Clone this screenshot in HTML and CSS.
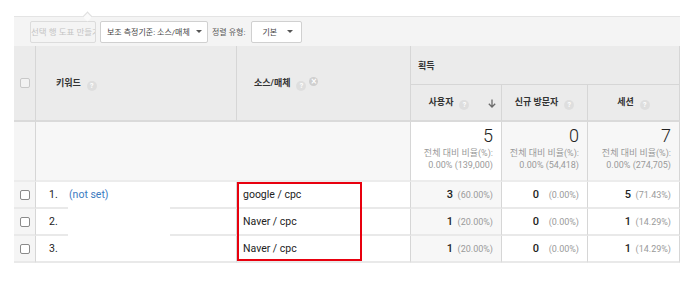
FILE: index.html
```html
<!DOCTYPE html>
<html lang="ko">
<head>
<meta charset="utf-8">
<title>보고서</title>
<link rel="stylesheet" href="styles.css">
</head>
<body>
<div class="page">
  <div class="toolbar">
    <span class="btn btn-disabled">선택 행 도표 만들기</span>
    <span class="btn btn-select btn-dim"><span class="btn-text">보조 측정기준: 소스/매체</span><span class="caret"></span></span>
    <span class="tool-label">정렬 유형:</span>
    <span class="btn btn-select btn-sort"><span class="btn-text">기본</span><span class="caret"></span></span>
  </div>
  <div class="table-wrap">
    <table class="report">
      <colgroup>
        <col class="w-chk"><col class="w-key"><col class="w-src"><col class="w-users"><col class="w-new"><col class="w-sess">
      </colgroup>
      <thead>
        <tr class="hrow1">
          <th rowspan="2" class="c-chk hcell"><span class="checkbox checkbox-head"></span></th>
          <th rowspan="2" class="hcell dim-key">키워드<span class="help">?</span></th>
          <th rowspan="2" class="hcell dim-src">소스/매체<span class="help">?</span><span class="remove">×</span></th>
          <th colspan="3" class="hcell group">획득</th>
        </tr>
        <tr class="hrow2">
          <th class="hcell metric metric-sorted">사용자<span class="help">?</span><svg class="sort-arrow" width="8" height="9" viewBox="0 0 8 9"><path d="M4 0.5V8M0.8 4.8L4 8L7.2 4.8" fill="none" stroke="#6b6b6b" stroke-width="1.3"/></svg></th>
          <th class="hcell metric">신규 방문자<span class="help">?</span></th>
          <th class="hcell metric">세션<span class="help">?</span></th>
        </tr>
      </thead>
      <tbody>
        <tr class="totals">
          <td class="c-chk"></td>
          <td colspan="2" class="tot-dim"></td>
          <td class="tot tot-sorted"><div class="tot-num">5</div><div class="tot-sub">전체 대비 비율(%):<br>0.00% (139,000)</div></td>
          <td class="tot"><div class="tot-num">0</div><div class="tot-sub">전체 대비 비율(%):<br>0.00% (54,418)</div></td>
          <td class="tot"><div class="tot-num">7</div><div class="tot-sub">전체 대비 비율(%):<br>0.00% (274,705)</div></td>
        </tr>
        <tr class="row">
          <td class="c-chk"><span class="checkbox"></span></td>
          <td class="key"><span class="idx">1.</span><a class="link">(not set)</a></td>
          <td class="src">google / cpc</td>
          <td class="val val-sorted"><b>3</b><span class="pct">(60.00%)</span></td>
          <td class="val"><b>0</b><span class="pct">(0.00%)</span></td>
          <td class="val"><b>5</b><span class="pct">(71.43%)</span></td>
        </tr>
        <tr class="row">
          <td class="c-chk"><span class="checkbox"></span></td>
          <td class="key"><span class="idx">2.</span></td>
          <td class="src">Naver / cpc</td>
          <td class="val val-sorted"><b>1</b><span class="pct">(20.00%)</span></td>
          <td class="val"><b>0</b><span class="pct">(0.00%)</span></td>
          <td class="val"><b>1</b><span class="pct">(14.29%)</span></td>
        </tr>
        <tr class="row">
          <td class="c-chk"><span class="checkbox"></span></td>
          <td class="key"><span class="idx">3.</span></td>
          <td class="src">Naver / cpc</td>
          <td class="val val-sorted"><b>1</b><span class="pct">(20.00%)</span></td>
          <td class="val"><b>0</b><span class="pct">(0.00%)</span></td>
          <td class="val"><b>1</b><span class="pct">(14.29%)</span></td>
        </tr>
      </tbody>
    </table>
    <div class="redact"></div>
    <div class="highlight"></div>
  </div>
</div>
</body>
</html>
```

FILE: styles.css
```css
* { box-sizing: border-box; }
html, body { margin: 0; padding: 0; background: #fff; }
body {
  font-family: Roboto, "Noto Sans CJK KR", sans-serif;
  color: #222;
}
.page {
  padding: 16px 0 0 14px;
  width: 700px;
}

/* toolbar */
.toolbar {
  position: relative;
  display: flex;
  align-items: center;
  width: 666px;
  height: 30px;
  border-top: 1px solid #e4e4e4;
  background: #f4f4f4;
  padding-left: 16px;
}
.toolbar::before {
  content: "";
  position: absolute;
  left: 70px;
  top: -4px;
  width: 6px;
  height: 6px;
  background: #fafafa;
  border-top: 1px solid #dedede;
  border-left: 1px solid #dedede;
  transform: rotate(45deg);
}
.btn {
  display: flex;
  align-items: center;
  height: 22px;
  border: 1px solid #d0d0d0;
  border-radius: 2px;
  background: #fff;
  font-size: 8px;
  color: #444;
  white-space: nowrap;
  overflow: hidden;
}
.btn-disabled {
  display: block;
  width: 66px;
  line-height: 20px;
  background: #f4f4f4;
  border-color: #dcdcdc;
  color: #c4c4c4;
  font-size: 8.5px;
  padding-left: 0;
}
.btn-dim {
  width: 108px;
  margin-left: 4px;
  padding-left: 6px;
}
.btn-sort {
  width: 51px;
  margin-left: 6px;
  padding-left: 10px;
}
.btn-text { flex: none; }
.caret {
  margin-left: auto;
  margin-right: 5px;
  width: 0;
  height: 0;
  border-left: 3px solid transparent;
  border-right: 3px solid transparent;
  border-top: 3px solid #555;
}
.btn-sort .caret { margin-left: 10px; }
.tool-label {
  margin-left: 4px;
  font-size: 8px;
  color: #555;
}

/* table */
.table-wrap {
  position: relative;
  width: 666px;
}
.report {
  width: 666px;
  table-layout: fixed;
  border-collapse: separate;
  border-spacing: 0;
}
.w-chk { width: 22px; }
.w-key { width: 201px; }
.w-src { width: 174px; }
.w-users { width: 91px; }
.w-new { width: 86px; }
.w-sess { width: 92px; }

.hcell {
  background: #ebebeb;
  font-size: 9px;
  font-weight: bold;
  color: #333;
  text-align: left;
  border-right: 1px solid #d6d6d6;
  padding: 0;
  vertical-align: middle;
  white-space: nowrap;
}
.hrow1 .hcell[rowspan] { border-bottom: 2px solid #dadada; }
.hrow1 { height: 39px; }
.hrow2 { height: 37px; }
.group {
  height: 39px;
  padding-left: 7px;
  border-bottom: 1px solid #d6d6d6;
}
.metric {
  height: 37px;
  text-align: center;
  border-bottom: 2px solid #dadada;
  position: relative;
}
.metric-sorted { padding-right: 14px; }
.sort-arrow {
  position: absolute;
  right: 5px;
  top: 14px;
}
.dim-key { padding-left: 20px; }
.dim-src { padding-left: 17px; }
.help {
  display: inline-block;
  width: 10px;
  height: 10px;
  margin-left: 6px;
  border-radius: 50%;
  background: #dedede;
  color: #fff;
  font-family: Roboto, sans-serif;
  font-size: 7px;
  font-weight: bold;
  line-height: 10px;
  text-align: center;
  vertical-align: -2px;
}
.remove {
  display: inline-block;
  width: 9px;
  height: 9px;
  margin-left: 3px;
  border-radius: 50%;
  background: #cfcfcf;
  color: #fff;
  font-family: "DejaVu Sans", sans-serif;
  font-size: 8px;
  font-weight: bold;
  line-height: 9px;
  text-align: center;
  vertical-align: 2px;
}

.c-chk {
  border-right: 1px solid #d6d6d6;
  text-align: center;
  padding: 0;
  vertical-align: middle;
}
tbody .c-chk { background: #f5f5f5; }
.checkbox {
  display: inline-block;
  width: 10px;
  height: 10px;
  border: 1px solid #8a8a8a;
  border-radius: 2px;
  background: #fff;
  vertical-align: middle;
}
.checkbox-head {
  border-color: #c8c8c8;
  background: #f2f2f2;
}

/* totals */
.totals td {
  height: 60px;
  border-bottom: 2px solid #ececec;
  background: #f7f7f7;
}
.totals .c-chk { background: #f5f5f5; }
.tot-dim { border-right: 1px solid #d6d6d6; }
.tot {
  text-align: right;
  vertical-align: top;
  padding: 4px 8px 0 0;
  border-right: 1px solid #d6d6d6;
}
.totals .tot-sorted { background: #fff; }
.tot-num {
  font-size: 18px;
  font-weight: 300;
  line-height: 20px;
  color: #222;
}
.tot-sub {
  margin-top: 1px;
  font-size: 9px;
  line-height: 12px;
  color: #9a9a9a;
}

/* rows */
.row td {
  height: 27px;
  border-bottom: 2px solid #e9e9e9;
  vertical-align: middle;
  padding: 0;
  font-size: 10.5px;
  white-space: nowrap;
}
.row:first-of-type td { height: 26px; }
.key { padding-left: 13px !important; border-right: 1px solid #d6d6d6; }
.idx { display: inline-block; width: 20px; color: #222; }
.link { color: #3b7bbf; }
.src { padding-left: 6px !important; border-right: 1px solid #d6d6d6; color: #222; }
.val {
  text-align: right;
  padding-right: 8px !important;
  border-right: 1px solid #d6d6d6;
}
.val-sorted { background: #f7f7f7; }
.val b { font-weight: 500; font-size: 11px; color: #222; }
.pct {
  display: inline-block;
  width: 40px;
  text-align: right;
  font-size: 9px;
  color: #9a9a9a;
}

/* overlays */
.redact {
  position: absolute;
  left: 54px;
  top: 157px;
  width: 102px;
  height: 37px;
  background: #fff;
}
.highlight {
  position: absolute;
  left: 223px;
  top: 136px;
  width: 125px;
  height: 79px;
  border: 2px solid #e8000e;
}
```
